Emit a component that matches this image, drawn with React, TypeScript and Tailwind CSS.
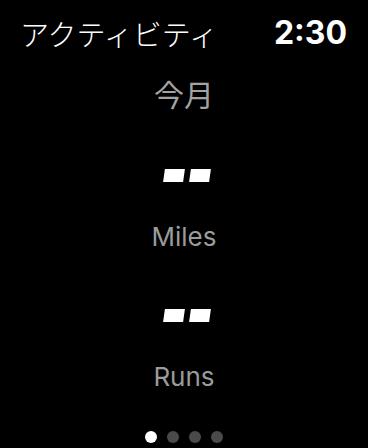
const jp = { fontFamily: '"Noto Sans CJK JP", "Noto Sans", sans-serif' };
const latin = { fontFamily: 'Inter, "Noto Sans", sans-serif' };

function Placeholder() {
    return (
        <div className="flex h-[14px] items-center justify-center gap-[6px]" aria-label="--">
            <span className="block h-[13px] w-[20px] -skew-x-[8deg] bg-white" />
            <span className="block h-[13px] w-[20px] -skew-x-[8deg] bg-white" />
        </div>
    );
}

function Stat({ label }: { label: string }) {
    return (
        <div className="flex flex-col items-center">
            <div className="pl-[6px]">
                <Placeholder />
            </div>
            <p className="mt-[40px] text-[26px] leading-[30px] text-[#9b9b9b]" style={latin}>
                {label}
            </p>
        </div>
    );
}

export default function App() {
    const pages = [true, false, false, false];

    return (
        <div className="flex h-[448px] w-[368px] flex-col overflow-hidden bg-black text-white">
            <header className="flex h-[66px] items-center justify-between pr-[21px] pl-[20px]">
                <h1 className="text-[29px] leading-none font-light" style={jp}>
                    アクティビティ
                </h1>
                <span className="text-[32px] leading-none font-bold" style={latin}>
                    2:30
                </span>
            </header>
            <p className="mt-[7px] text-center text-[30px] leading-[40px] text-[#a3a3a3]" style={jp}>
                今月
            </p>
            <div className="mt-[55px] flex flex-col items-center gap-[56px]">
                <Stat label="Miles" />
                <Stat label="Runs" />
            </div>
            <div className="mt-auto mb-[5px] flex justify-center gap-[10px]">
                {pages.map((active, i) => (
                    <span
                        key={i}
                        className={`block size-[12px] rounded-full ${active ? 'bg-white' : 'bg-[#4a4a4a]'}`}
                    />
                ))}
            </div>
        </div>
    );
}
